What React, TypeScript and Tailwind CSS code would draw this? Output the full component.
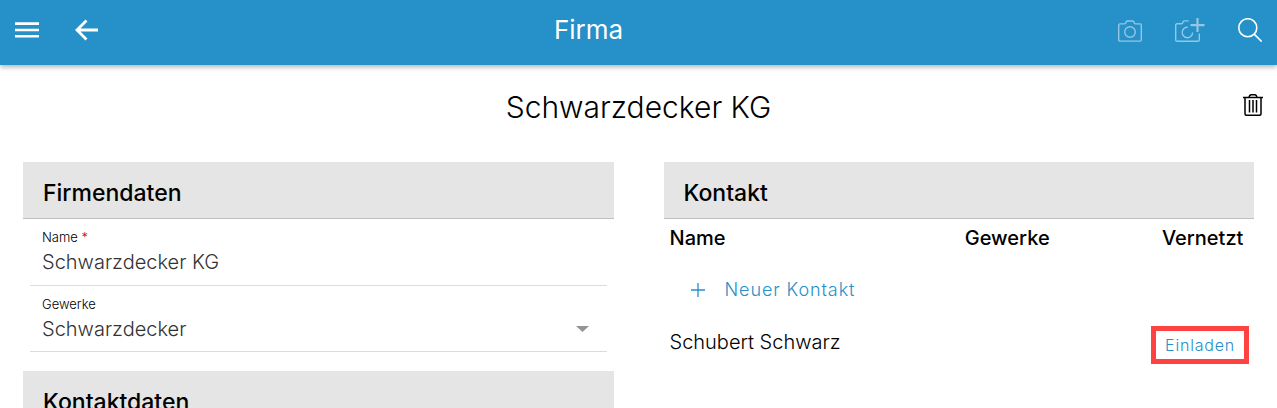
import React, { useState } from 'react';

interface Contact {
  id: number;
  name: string;
  trade: string;
}

const contacts: Contact[] = [{ id: 1, name: 'Schubert Schwarz', trade: '' }];

const MenuIcon = () => (
  <svg className="h-6 w-6" viewBox="0 0 24 24" fill="none" stroke="currentColor" strokeWidth="2.6">
    <path d="M0 5.6h24M0 12h24M0 18.3h24" />
  </svg>
);

const BackIcon = () => (
  <svg className="h-6 w-6" viewBox="0 0 24 24" fill="none" stroke="currentColor" strokeWidth="2.8">
    <path d="M12.5 2.4L3 12l9.5 9.6M3 12h21" />
  </svg>
);

const CameraIcon = () => (
  <svg className="h-6 w-6" viewBox="0 -1 24 24" fill="none" stroke="currentColor" strokeWidth="1.4" strokeLinejoin="round">
    <path d="M2 4.9h4.6c.5 0 .8-.2 1-.7l.6-1.500c.2-.5.5-.7 1-.7h5.600c.5 0 .8.200 1 .7l.6 1.500c.2.5.5.7 1 .7H22c.8 0 1.300.5 1.300 1.300v14.600c0 .8-.5 1.300-1.300 1.300H2c-.8 0-1.300-.5-1.300-1.300V6.200c0-.8.500-1.300 1.300-1.300z" />
    <circle cx="12" cy="13" r="5.3" />
  </svg>
);

const CameraPlusIcon = () => (
  <svg className="h-6 w-[30px]" viewBox="0 0 30 24" fill="none" stroke="currentColor" strokeWidth="1.4">
    <path d="M13.7 2.9H9.200c-.5 0-.8.200-1 .7l-.6 1.500c-.2.500-.5.700-1 .700H2C1.200 5.800.7 6.300.7 7.100v14.900c0 .8.500 1.300 1.300 1.300h21c.8 0 1.300-.5 1.300-1.300V15.500" />
    <path d="M12.800 9.300a5.200 5.200 0 1 0 4.800 5.200" />
    <path d="M15.5 7.100H29.500M22.500 0v14" strokeWidth="2.2" />
  </svg>
);

const SearchIcon = () => (
  <svg className="h-6 w-6" viewBox="0 0 24 24" fill="none" stroke="currentColor" strokeWidth="1.6">
    <circle cx="9.8" cy="9.7" r="9" />
    <path d="M16.200 16.100l7.500 7.500" />
  </svg>
);

const TrashIcon = () => (
  <svg className="h-[22px] w-5" viewBox="0 0 20 22" fill="none" stroke="currentColor" strokeWidth="1.5">
    <path d="M0 3.500h20M6 3.200c.3-1.600 1-2.500 2.300-2.500h3.400c1.300 0 2 .9 2.300 2.500M2 3.400v16.400c0 .9.500 1.500 1.400 1.500h13.200c.9 0 1.400-.6 1.400-1.500V3.400" />
    <path d="M6.500 6V18.500M10 6V18.500M13.500 6V18.500" />
  </svg>
);

const SectionTitle: React.FC<{ children: React.ReactNode }> = ({ children }) => (
  <h2 className="border-b border-[#c0c0c0] bg-[#e5e5e5] px-5 pt-[13px] pb-[7px] text-[23px] leading-9 font-medium">{children}</h2>
);

const App: React.FC = () => {
  const [name, setName] = useState('Schwarzdecker KG');
  const [trade, setTrade] = useState('Schwarzdecker');

  return (
    <div className="flex h-screen flex-col overflow-hidden bg-white font-[Inter,sans-serif] text-black">
      <header className="z-10 grid h-[65px] shrink-0 grid-cols-[1fr_auto_1fr] items-center bg-[#2690c8] px-[15px] pb-[5px] text-white shadow-[0_2px_5px_rgba(0,0,0,0.3)]">
        <div className="flex items-center gap-[35px]">
          <button aria-label="Menü"><MenuIcon /></button>
          <button aria-label="Zurück"><BackIcon /></button>
        </div>
        <div className="pr-25 text-[26px] leading-9">Firma</div>
        <div className="flex items-center justify-end gap-[33px]">
          <button aria-label="Foto" disabled className="opacity-50"><CameraIcon /></button>
          <button aria-label="Foto hinzufügen" disabled className="opacity-50"><CameraPlusIcon /></button>
          <button aria-label="Suche"><SearchIcon /></button>
        </div>
      </header>

      <main className="flex-1 overflow-hidden">
        <div className="grid grid-cols-[1fr_auto_1fr] items-center px-[14px] pt-[22px] pb-[35px]">
          <h1 className="col-start-2 text-[30px] leading-10 font-light">{name}</h1>
          <button aria-label="Firma löschen" className="justify-self-end pb-1"><TrashIcon /></button>
        </div>

        <div className="grid grid-cols-2 gap-[50px] px-[23px]">
          <div>
            <section>
              <SectionTitle>Firmendaten</SectionTitle>
              <div className="px-[7px]">
                <div className="border-b border-[#dcdcdc] px-3 py-2">
                  <label htmlFor="name" className="block text-[13px] leading-5 font-light">
                    Name <span className="text-red-700">*</span>
                  </label>
                  <input
                    id="name"
                    value={name}
                    onChange={e => setName(e.target.value)}
                    className="block h-[30px] w-full text-xl font-light text-[#333] outline-none"
                  />
                </div>
                <div className="border-b border-[#dcdcdc] px-3 pt-2 pb-[7px]">
                  <label htmlFor="trade" className="block text-[13px] leading-5 font-light">Gewerke</label>
                  <div className="relative">
                    <select
                      id="trade"
                      value={trade}
                      onChange={e => setTrade(e.target.value)}
                      className="block h-[30px] w-full appearance-none text-xl font-light text-[#333] outline-none"
                    >
                      <option>Schwarzdecker</option>
                    </select>
                    <svg className="pointer-events-none absolute top-3 right-1.5 h-1.5 w-3.25" viewBox="0 0 13 6">
                      <path d="M0 0h13L6.500 6z" fill="#949494" />
                    </svg>
                  </div>
                </div>
              </div>
            </section>

            <section className="mt-[19px]">
              <SectionTitle>Kontaktdaten</SectionTitle>
            </section>
          </div>

          <section>
            <SectionTitle>Kontakt</SectionTitle>
            <table className="w-full table-fixed text-left text-xl">
              <thead>
                <tr className="leading-[38px]">
                  <th className="w-1/2 px-1.5 font-medium">Name</th>
                  <th className="px-1.5 font-medium">Gewerke</th>
                  <th className="w-[98px] px-1.5 font-medium">Vernetzt</th>
                </tr>
              </thead>
              <tbody>
                <tr>
                  <td colSpan={3} className="h-[66px] px-[27px]">
                    <button className="flex items-center gap-5 text-lg font-light tracking-wider text-[#2690c8]">
                      <svg className="h-3.5 w-3.5" viewBox="0 0 14 14" fill="none" stroke="currentColor" strokeWidth="1.3">
                        <path d="M0 7h14M7 0v14" />
                      </svg>
                      Neuer Kontakt
                    </button>
                  </td>
                </tr>
                {contacts.map(c => (
                  <tr key={c.id} className="align-top">
                    <td className="px-1.5 pt-[5px] font-light">{c.name}</td>
                    <td className="px-1.5 pt-[5px] font-light">{c.trade}</td>
                    <td className="pt-[3px] pr-[5px]">
                      <button className="float-right -ml-2 h-[38px] border-[5px] border-[#ff4343] px-[9px] text-base font-light tracking-wider text-[#2690c8]">
                        Einladen
                      </button>
                    </td>
                  </tr>
                ))}
              </tbody>
            </table>
          </section>
        </div>
      </main>
    </div>
  );
};

export default App;
